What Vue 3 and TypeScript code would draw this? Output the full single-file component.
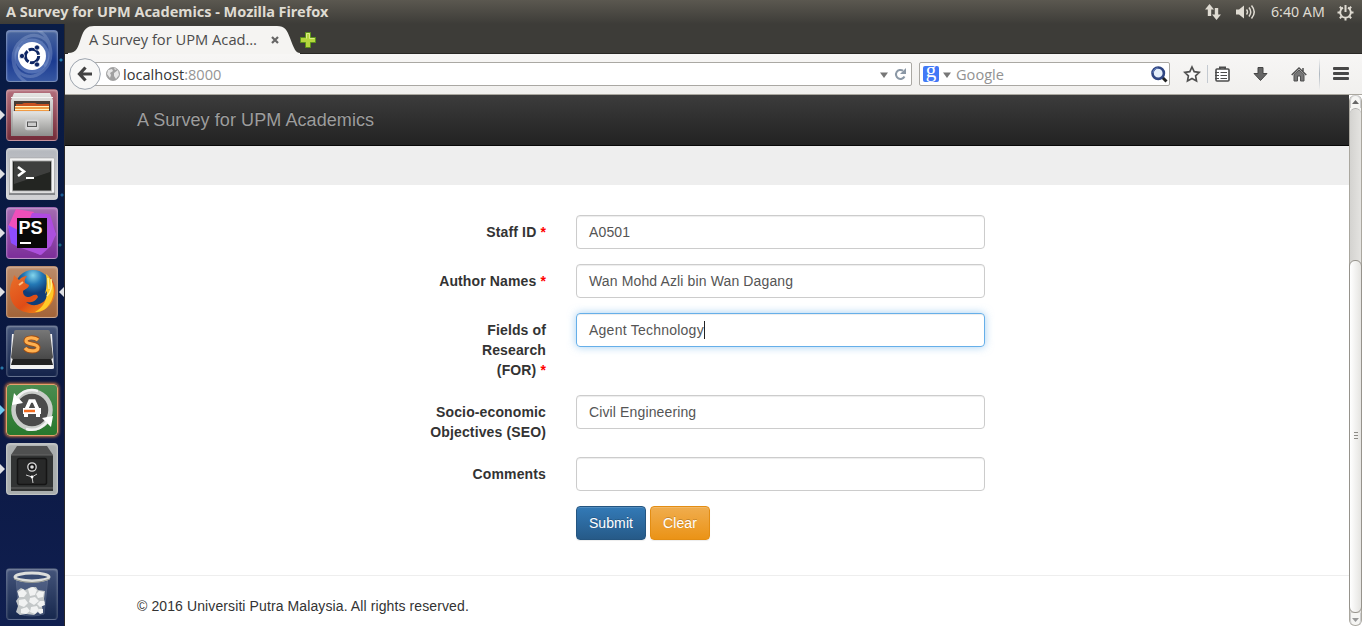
<script setup lang="ts">
interface Field {
  label: string[]
  value: string
  required?: boolean
  focused?: boolean
}

interface LauncherItem {
  name: string
  left?: boolean
  right?: boolean
}

const fields: Field[] = [
  { label: ['Staff ID'], value: 'A0501', required: true },
  { label: ['Author Names'], value: 'Wan Mohd Azli bin Wan Dagang', required: true },
  { label: ['Fields of', 'Research', '(FOR)'], value: 'Agent Technology', required: true, focused: true },
  { label: ['Socio-economic', 'Objectives (SEO)'], value: 'Civil Engineering' },
  { label: ['Comments'], value: '' },
]

const launcher: LauncherItem[] = [
  { name: 'dash' },
  { name: 'files', left: true },
  { name: 'terminal', left: true },
  { name: 'phpstorm', left: true },
  { name: 'firefox', left: true, right: true },
  { name: 'sublime' },
  { name: 'updater', left: true },
  { name: 'safe', left: true },
  { name: 'trash' },
]
</script>

<template>
  <div class="desktop">
    <header class="panel">
      <span class="panel-title">A Survey for UPM Academics - Mozilla Firefox</span>
      <div class="indicators">
        <svg class="net" width="18" height="18" viewBox="0 0 18 18"><path d="M5.500 1 10 6.500H7.200V13H3.800V6.500H1zM12.500 17 8 11.500h2.800V5h3.400v6.500H17z" fill="#dfdbd2" /></svg>
        <svg class="vol" width="21" height="16" viewBox="0 0 21 16"><path d="M1 5.500h3l5-4v13l-5-4H1z" fill="#dfdbd2" /><path d="M11.500 5.500q2 2.500 0 5M14 3.500q3.500 4.500 0 9M16.500 1.500q5.500 6.500 0 13" fill="none" stroke="#dfdbd2" stroke-width="1.500" /></svg>
        <span class="clock">6:40 AM</span>
        <svg class="gear" width="17" height="17" viewBox="0 0 17 17"><g stroke="#dfdbd2" fill="none"><path d="M6 3.700a5.300 5.300 0 1 0 5 0" stroke-width="1.900" /><path d="M8.500 1v7" stroke-width="2" /><path d="M.5 8.500H3M14 8.500h2.500M2.800 2.800l1.700 1.700M14.200 2.800l-1.700 1.700M2.800 14.200l1.700-1.700M14.200 14.200l-1.700-1.700M8.500 14v2.500" stroke-width="2" /></g></svg>
      </div>
    </header>

    <div class="workspace">
      <nav class="launcher">
        <div v-for="item in launcher" :key="item.name" class="slot" :class="item.name">
          <span v-if="item.left" class="arrow-left"></span>
          <span v-if="item.right" class="arrow-right"></span>
          <div class="tile">
            <svg v-if="item.name === 'dash'" width="52" height="52" viewBox="0 0 52 52">
              <path d="M20 52C4 42 3 20 16 10s30-2 28 14c0 6-3 10-6 12M32 0c14 8 18 30 5 41S9 45 8 30c0-6 2-10 5-13" fill="none" stroke="#c4d2f0" stroke-opacity=".25" stroke-width="3" />
              <circle cx="26" cy="26" r="17.500" fill="#8fa9df" opacity=".4" /><circle cx="26" cy="26" r="14" fill="#fff" />
              <circle cx="26" cy="26" r="6.700" fill="none" stroke="#0d2563" stroke-width="3" stroke-dasharray="12.500 1.500" />
              <g fill="#0d2563" stroke="#fff" stroke-width=".7"><circle cx="16" cy="26" r="2.600" /><circle cx="31" cy="17.500" r="2.600" /><circle cx="31" cy="34.500" r="2.600" /></g>
            </svg>
            <svg v-else-if="item.name === 'files'" width="52" height="52" viewBox="0 0 52 52">
              <defs><linearGradient id="cab" x2="0" y2="1"><stop stop-color="#e6e6e4" /><stop offset="1" stop-color="#8e8e8c" /></linearGradient></defs>
              <path d="M8 4h36l3 7v36H5V11z" fill="url(#cab)" /><path d="M5 8.500h42" stroke="#f4f4f4" />
              <path d="M8 12h36v11H8z" fill="#483c34" /><path d="M10 15h6l2-1h11l2 1h12v7H10z" fill="#c95220" /><path d="M9 18h34v4H9z" fill="#f09a43" /><path d="M9 17.500h34M9 20.500h34" stroke="#fff2bc" />
              <path d="M7 22h38v25H7z" fill="url(#cab)" /><path d="M7 22.500h38" stroke="#ddd" />
              <rect x="19.500" y="30.500" width="13" height="10" rx="2" fill="#ddd" stroke="#ccc" stroke-width="1.500" /><rect x="21.500" y="33" width="9" height="4.500" fill="#ccc" stroke="#555" />
            </svg>
            <svg v-else-if="item.name === 'terminal'" width="52" height="52" viewBox="0 0 52 52">
              <path d="M4 10h44l1 37H3z" fill="#85878a" /><rect x="3.500" y="10" width="45" height="35" rx="1" fill="#f3f3f3" stroke="#999" stroke-width=".5" />
              <rect x="6.500" y="13" width="39" height="30" fill="#232522" stroke="#aaa" /><path d="M8 14h36v10L8 36z" fill="#555" opacity=".55" />
              <path d="m12 19 6 4.500-6 4.500" fill="none" stroke="#fff" stroke-width="2.600" /><path d="M20 30h8" stroke="#fff" stroke-width="2" />
            </svg>
            <svg v-else-if="item.name === 'phpstorm'" width="52" height="52" viewBox="0 0 52 52">
              <path d="m10 2 18 3-17 31L2 20z" fill="#f04fba" /><path d="m26 6 18 1 6 21-16 20-20-10z" fill="#b04ae2" /><path d="m42 10 8 17-5 12-10 9-20-7z" fill="#ac50dd" /><path d="m2 18 10 5v17l-7-4z" fill="#8c4cff" />
              <rect x="11" y="11" width="30" height="30" fill="#080808" /><text x="12.500" y="27" class="ps">PS</text><path d="M14 36h11" stroke="#fff" stroke-width="2" />
            </svg>
            <svg v-else-if="item.name === 'firefox'" width="52" height="52" viewBox="0 0 52 52">
              <defs><radialGradient id="globe" cx=".5" cy=".15"><stop stop-color="#83d5ec" /><stop offset=".5" stop-color="#2479b6" /><stop offset="1" stop-color="#103d78" /></radialGradient><linearGradient id="fox" x2="1" y2="1"><stop stop-color="#e8702a" /><stop offset=".55" stop-color="#e04c16" /><stop offset="1" stop-color="#f9a51b" /></linearGradient></defs>
              <circle cx="27" cy="22" r="18" fill="url(#globe)" />
              <path d="M43 10c6 6 7 13 6 18-2 12-12 19-23 19C13 47 4 38 4 27c0-6 1-10 3-13l1-5 5 5c3-3 5-4 8-4-2 2-3 5-2 7l4 2c0 3-4 4-6 6 0 4 2 6 6 6 3 0 4-3 8-2l1 2c-3 5-8 6-12 5 5 5 15 4 20-3 4-6 5-14 3-23z" fill="url(#fox)" />
              <path d="M40 8c10 8 10 23 2 32-3 4-8 6-13 6 9-5 12-13 12-21l-2 3c2-7 2-14 1-20z" fill="#ffc928" /><path d="m42 12 1 11m2-10q2 11-4 17" stroke="#ffef91" stroke-width="1.500" fill="none" />
              <path d="m13 19 4-3" stroke="#ffc083" stroke-width="2" />
            </svg>
            <svg v-else-if="item.name === 'sublime'" width="52" height="52" viewBox="0 0 52 52">
              <defs><linearGradient id="key" x2="0" y2="1"><stop stop-color="#777" /><stop offset="1" stop-color="#484848" /></linearGradient></defs>
              <path d="m6 9-2 34q0 1 2 1h40q2 0 2-1L46 9z" fill="#f2f2f2" /><path d="M7 33h38l2 7H5z" fill="#222" /><path d="M10 5h32q2 0 2 2l3 25q0 2-2 2H7q-2 0-2-2L8 7q0-2 2-2z" fill="url(#key)" />
              <path d="M32 15c-3-3-12-3-12 1s12 2 12 6.500-10 4.500-13 .5" fill="none" stroke="#a44f12" stroke-width="5" /><path d="M32 15c-3-3-12-3-12 1s12 2 12 6.500-10 4.500-13 .5" fill="none" stroke="#ffb04f" stroke-width="3.200" />
            </svg>
            <svg v-else-if="item.name === 'updater'" width="52" height="52" viewBox="0 0 52 52">
              <circle cx="26" cy="26" r="18.500" fill="#4b4b4b" stroke="#c9ccc9" stroke-width="4.500" />
              <path d="m8 9 9 10-11 2zM45 43l-9-9 11-2z" fill="#fff" /><path d="M11 14C17 6 25 5 32 7M41 38c-6 7-14 9-21 7" fill="none" stroke="#f2f2f2" stroke-width="2.500" />
              <path d="M20 26 24 17h4l4 9" fill="none" stroke="#fff" stroke-width="3.600" /><path d="M18 30h4v3h-4zM30 30h4v3h-4z" fill="#fff" /><path d="M17 24h18v6H17z" fill="#fff" /><path d="M18 27h11" stroke="#f26c21" stroke-width="2.500" />
            </svg>
            <svg v-else-if="item.name === 'safe'" width="52" height="52" viewBox="0 0 52 52">
              <path d="M11 3h30l6 9v36H5V12z" fill="#4f5050" /><path d="M5 12h42v36H5z" fill="#323434" /><path d="M5 12h42M5 45h42" stroke="#666" /><rect x="11.500" y="15.500" width="29" height="26" rx="2" fill="#282929" stroke="#151515" stroke-width="1.500" />
              <circle cx="26" cy="24" r="4.200" fill="#151515" stroke="#ddd" stroke-width="1.300" /><circle cx="26" cy="24" r="1.800" fill="#ddd" /><path d="m20 32 6 2 5-3m-5 3 1 6" fill="none" stroke="#ccc" stroke-width="1" /><circle cx="26" cy="34" r="1.400" fill="#fff" />
            </svg>
            <svg v-else width="52" height="52" viewBox="0 0 52 52">
              <path d="m10 9 3 37q13 4 25 0l4-37z" fill="#91a0be" opacity=".25" stroke="#b5bfd2" />
              <path d="m11 23 4-3 4 2 6-3 5 0 2 3 7 1-1 8 1 4-3 3 1 7-5-1-4 3-8-1-6 1-4-3 2-6-2-5 3-4z" fill="#c3c7c8" />
              <g fill="#f1f2f2"><path d="m12 24 5-3 4 4-3 4-5 0zM22 21l5-2 4 3-2 5-5 1zM33 23l5 1-1 5-5 1-2-4zM13 32l6-1 3 4-4 4-5-2zM24 30l5-1 4 4-5 4-5-3zM34 33l4 0 1 4-5 2-3-3zM15 41l6-2 3 4-4 3-5-1zM25 39l6-1 2 4-4 4-5-2zM33 41l4 0 0 4-3 1-2-2z" /></g>
              <ellipse cx="26" cy="9" rx="17" ry="4" fill="#3a4c72" stroke="#dedfdc" stroke-width="3" /><path d="M8 11q18 7 36 0" stroke="#92958f" fill="none" />
            </svg>
          </div>
        </div>
      </nav>

      <main class="browser">
        <div class="tab-strip">
          <div class="tab">
            <svg class="tab-shape" width="232" height="30" viewBox="0 0 232 30"><path d="M0 30v-1c9 0 10-6 13-15C16 5 19 2 26 2h183c8 0 10 4 13 12 4 11 6 15 10 15v1z" fill="#f5f4f2" /></svg>
            <span class="tab-title">A Survey for UPM Acad…</span>
            <svg class="tab-close" width="8" height="8" viewBox="0 0 8 8"><path d="m1 1 6 6m0-6L1 7" stroke="#666" stroke-width="2.200" /></svg>
          </div>
          <svg class="plus" width="16" height="16" viewBox="0 0 16 16"><path d="M5.500.5h5v5h5v5h-5v5h-5v-5h-5v-5h5z" fill="#b5d73d" stroke="#5c931b" /><path d="M6.500 6.500v-5h3v5h5" fill="none" stroke="#dced87" /></svg>
        </div>

        <div class="toolbar">
          <svg class="back" width="32" height="32" viewBox="0 0 32 32"><circle cx="16" cy="16" r="15.300" fill="#f8f8f7" stroke="#9ba3ad" /><path d="M10 16h13M16.500 9.500 10.500 16l6 6.500" fill="none" stroke="#424242" stroke-width="3.200" /></svg>
          <div class="address">
            <svg width="14" height="14" viewBox="0 0 14 14"><circle cx="7" cy="7" r="6.500" fill="#a0a0a0" stroke="#999" stroke-width=".8" /><path d="M2 3l4-1 1 2-3 2 1 2-1 3-3-4zM8 6l4-3 1 5-3 4-2-3zM8 1l3 1-2 1z" fill="#e6e6e6" /></svg>
            <span class="url">localhost<i>:8000</i></span>
            <svg class="drop" width="8" height="6" viewBox="0 0 8 6"><path d="M0 .5h8L4 6z" fill="#777" /></svg>
            <svg class="reload" width="13" height="13" viewBox="0 0 13 13"><path d="M10.500 8.500A4.500 4.500 0 1 1 9 2.700" fill="none" stroke="#8b98a6" stroke-width="2" /><path d="M12 0v6H6z" fill="#8b98a6" /></svg>
          </div>
          <div class="search">
            <span class="google">g</span>
            <svg class="drop" width="8" height="6" viewBox="0 0 8 6"><path d="M0 .5h8L4 6z" fill="#777" /></svg>
            <span class="search-hint">Google</span>
            <svg class="magnifier" width="17" height="17" viewBox="0 0 17 17"><path d="m11 11 4.500 4.500" stroke="#222" stroke-width="3" /><circle cx="7.200" cy="7.200" r="5.700" fill="#e4eefa" stroke="#304683" stroke-width="2.600" /><path d="M2 7a5 5 0 0 1 5-5" stroke="#6f8ac7" fill="none" /></svg>
          </div>
          <svg class="star" width="18" height="18" viewBox="0 0 18 18"><path d="m9 2 2.200 4.600 5.100.7-3.700 3.500.9 5.100L9 13.500l-4.500 2.400.9-5.100-3.700-3.500 5.100-.7z" fill="#fafafa" stroke="#505050" stroke-width="1.700" /></svg>
          <span class="thin-divider"></span>
          <svg class="clipboard" width="15" height="16" viewBox="0 0 15 16"><path d="M5 3V1.500h5V3" fill="none" stroke="#4c4c4c" stroke-width="2" /><rect x="1" y="3" width="13" height="12" rx="1" fill="#fff" stroke="#4c4c4c" stroke-width="1.600" /><path d="M0 6.500h4m1.500 0H12m-12 3h4m1.500 0H12m-12 3h4m1.500 0H12" stroke="#4c4c4c" stroke-width="1" /></svg>
          <svg class="download" width="15" height="16" viewBox="0 0 15 16"><path d="M5 1.500h5v6h4l-6.500 7L1 7.500h4z" fill="#656565" stroke="#454545" /></svg>
          <svg class="home" width="16" height="16" viewBox="0 0 16 16"><path d="M3 8.500 8 4l5 4.500V15H9.500v-5h-3v5H3z" fill="#777" stroke="#505050" /><path d="M.7 9 8 2l7.300 7M12 2v4" fill="none" stroke="#505050" stroke-width="1.500" /></svg>
          <span class="long-divider"></span>
          <svg class="menu" width="16" height="13" viewBox="0 0 16 13"><path d="M1 1.500h14m-14 5h14m-14 5h14" stroke="#474747" stroke-width="2.800" stroke-linecap="round" /></svg>
        </div>

        <div class="viewport">
          <div class="page">
            <div class="navbar"><span>A Survey for UPM Academics</span></div>
            <div class="band"></div>
            <form class="survey" @submit.prevent>
              <div v-for="field in fields" :key="field.label[0]" class="row">
                <label>
                  <template v-for="(line, i) in field.label" :key="line"><br v-if="i" />{{ line }}</template><span v-if="field.required" class="required"> *</span>
                </label>
                <div class="control" :class="{ focused: field.focused }"><span>{{ field.value }}</span><span v-if="field.focused" class="caret"></span></div>
              </div>
              <div class="actions">
                <button class="primary" type="button">Submit</button>
                <button class="warning" type="button">Clear</button>
              </div>
            </form>
            <footer><span>© 2016 Universiti Putra Malaysia. All rights reserved.</span></footer>
          </div>
          <div class="scrollbar">
            <div class="scroll-button"><svg width="7" height="4" viewBox="0 0 7 4"><path d="M0 4h7L3.500 0z" fill="#666" /></svg></div>
            <div class="track"><div class="thumb"><i></i><i></i><i></i></div></div>
            <div class="scroll-button down"><svg width="7" height="4" viewBox="0 0 7 4"><path d="M0 0h7L3.500 4z" fill="#999" /></svg></div>
          </div>
        </div>
      </main>
    </div>
  </div>
</template>

<style>
html, body { margin: 0; overflow: hidden; }
</style>

<style scoped>
* { box-sizing: border-box; }
svg { display: block; flex: none; }
.desktop { width: 1362px; height: 626px; overflow: hidden; font-family: 'Open Sans', 'Noto Sans', sans-serif; background: #fff; }
.panel { height: 24px; background: linear-gradient(#5b5850, #3d3c38); color: #dfdbd2; display: flex; align-items: center; justify-content: space-between; }
.panel-title { margin-left: 6px; padding-bottom: 2px; font: 700 14.500px/22px 'Noto Sans', sans-serif; letter-spacing: -.02px; white-space: nowrap; }
.indicators { display: flex; align-items: center; padding-right: 8px; }
.vol { margin-left: 13px; }
.clock { width: 54px; margin-left: 15px; font: 14.200px/24px 'Noto Sans', sans-serif; white-space: nowrap; }
.gear { margin-left: 12px; }
.workspace { display: flex; height: 602px; }
.launcher { width: 65px; flex: none; padding: 6px 0 6px 6px; display: flex; flex-direction: column; gap: 7px; background: radial-gradient(circle at 61px 36px, #237caf 0 1px, transparent 2px), radial-gradient(circle at 62px 171px, #1c5c93 0 1px, transparent 2px), radial-gradient(circle at 60px 221px, #18677c 0 1px, transparent 2px), radial-gradient(circle at 2px 344px, #2878a9 0 1px, transparent 2px), linear-gradient(#091c46, #0a1740 55%, #101f50); border-right: 1px solid #29282b; }
.slot { position: relative; width: 52px; height: 52px; flex: none; }
.tile { width: 52px; height: 52px; border: 1px solid #ffffff45; border-radius: 4px; box-shadow: inset 0 1px 2px #fff5; overflow: hidden; }
.tile svg { margin: -1px; }
.dash .tile { background: linear-gradient(#48659e, #1b3b91 60%, #3657a2); }
.files .tile { background: linear-gradient(#b36e7b, #732b38); }
.terminal .tile { background: linear-gradient(#b4b7bd, #d2d2d4); }
.phpstorm .tile { background: linear-gradient(#a56bb2, #7c2e9a); }
.firefox .tile { background: linear-gradient(#bc8b69, #a36439); }
.sublime .tile { background: linear-gradient(#47577a, #14234b); border-color: #ffffff28; }
.updater .tile { background: linear-gradient(#4b8c50, #28782d); border-color: #e5a16d; box-shadow: 0 0 3px 1px #cf7740; }
.safe .tile { background: #a9adad; }
.trash { margin-top: auto; }
.trash .tile { background: linear-gradient(#44547a, #17284e); border-color: #ffffff28; }
.arrow-left, .arrow-right { position: absolute; top: 21px; border: 5px solid transparent; }
.arrow-left { left: -6px; border-left-color: #dfe0e4; border-right: 0; }
.arrow-right { right: -6px; border-right-color: #dfe0e4; border-left: 0; }
.updater .arrow-left { border-left-color: #6ec7ef; }
.ps { font: 700 18px 'Liberation Sans', sans-serif; fill: #fff; }
.browser { width: 1297px; flex: none; }
.tab-strip { display: flex; height: 30px; background: #3d3c38; box-shadow: inset 0 -1px #292825; }
.tab { position: relative; width: 232px; margin-left: 3px; display: flex; align-items: center; }
.tab-shape { position: absolute; left: 0; top: 0; }
.tab-title { position: relative; margin-left: 21px; width: 171px; color: #4c4c4c; font-size: 14.700px; line-height: 20px; white-space: nowrap; }
.tab-close { position: relative; margin: 2px 0 0 11px; }
.plus { margin: 8px 0 0; }
.toolbar { height: 41px; display: flex; align-items: center; background: linear-gradient(#f7f6f5, #f1f0ee); border-bottom: 1px solid #aaa79f; }
.back { position: relative; margin-left: 4px; }
.address { width: 826px; height: 24px; margin-left: -15px; padding: 0 4px 0 19px; display: flex; align-items: center; background: #fff; border: 1px solid #aaa8a3; border-radius: 2px; }
.url { margin-left: 3px; padding-bottom: 1px; color: #353535; font-size: 14.600px; line-height: 20px; white-space: nowrap; }
.url i { font-style: normal; color: #959595; }
.address .drop { margin-left: auto; margin-top: 2px; }
.reload { margin-left: 6px; }
.search { width: 251px; height: 24px; margin-left: 7px; padding: 0 1px 0 3px; display: flex; align-items: center; background: #fff; border: 1px solid #aaa8a3; border-radius: 2px; }
.google { width: 16px; height: 16px; border-radius: 2px; background: #4279f7; color: #fff; font: 21px/9px 'Liberation Serif', serif; text-align: center; }
.search .drop { margin-left: 4px; margin-top: 2px; }
.search-hint { margin-left: 5px; padding-bottom: 1px; color: #929292; font-size: 14.600px; line-height: 20px; }
.magnifier { margin-left: auto; }
.star { margin-left: 13px; }
.thin-divider { width: 1px; height: 18px; margin-left: 6px; background: #c4cad1; }
.clipboard { margin-left: 7px; }
.download { margin-left: 23px; }
.home { margin-left: 23px; }
.long-divider { width: 1px; height: 32px; margin-left: 12px; background: linear-gradient(transparent, #aeb7c0, transparent); }
.menu { margin-left: 13px; margin-bottom: 1px; }
.viewport { display: flex; height: 531px; }
.page { width: 1284px; overflow: hidden; background: #fff; font-family: 'Liberation Sans', Arial, sans-serif; font-size: 14px; line-height: 20px; color: #333; }
.navbar { height: 51px; background: linear-gradient(#3c3c3c, #222); border-bottom: 1px solid #080808; padding: 15px 72px; font-size: 18px; letter-spacing: .08px; color: #9d9d9d; text-shadow: 0 -1px 0 #0004; }
.band { height: 39px; background: #eee; }
.survey { padding: 30px 0 0 341px; }
.row { display: flex; align-items: flex-start; gap: 30px; margin-bottom: 15px; }
.row label { width: 140px; padding-top: 7px; text-align: right; font-weight: 700; letter-spacing: .13px; white-space: nowrap; }
.required { color: red; white-space: pre; }
.control { width: 409px; height: 34px; padding: 6px 12px; border: 1px solid #ccc; border-radius: 4px; box-shadow: inset 0 1px 1px #00000013; display: flex; color: #555; letter-spacing: .13px; }
.focused { border-color: #66afe9; box-shadow: inset 0 1px 1px #00000013, 0 0 8px #66afe999; letter-spacing: .24px; }
.caret { width: 1px; height: 18px; margin-top: 1px; background: #222; }
.actions { display: flex; gap: 4px; margin-left: 170px; }
button { height: 34px; padding: 0; border: 1px solid; border-radius: 4px; color: #fff; font: 14px/20px 'Liberation Sans', Arial, sans-serif; letter-spacing: .1px; text-shadow: 0 -1px 0 #0003; box-shadow: inset 0 1px 0 #ffffff26, 0 1px 1px #00000013; }
.primary { width: 70px; background: linear-gradient(#337ab7, #265a88); border-color: #245580; }
.warning { width: 60px; background: linear-gradient(#f0ad4e, #eb9316); border-color: #e38d13; }
footer { margin-top: 35px; padding: 20px 72px; border-top: 1px solid #eee; letter-spacing: .105px; }
.scrollbar { width: 13px; display: flex; flex-direction: column; border: 1px solid #aaa79f; border-top: 0; border-radius: 6px; background: #f5f5f3; }
.scroll-button { height: 13px; flex: none; display: flex; align-items: center; justify-content: center; border: 1px solid #ccc; border-bottom: 0; border-radius: 6px 6px 0 0; }
.down { border-top: 0; border-radius: 0 0 6px 6px; }
.track { flex: 1; padding-top: 151px; background: linear-gradient(90deg, #d4d3d0, #e4e3e0); border-top: 1px solid #aaa; border-radius: 6px 6px 0 0; }
.thumb { height: 353px; margin: 0 -1px; padding-bottom: 3px; border: 1px solid #96938c; border-radius: 6px; background: linear-gradient(90deg, #fff, #e5e4e1); display: flex; flex-direction: column; align-items: center; justify-content: center; gap: 2px; }
.thumb i { width: 4px; height: 1px; background: #8d8b86; }
</style>
